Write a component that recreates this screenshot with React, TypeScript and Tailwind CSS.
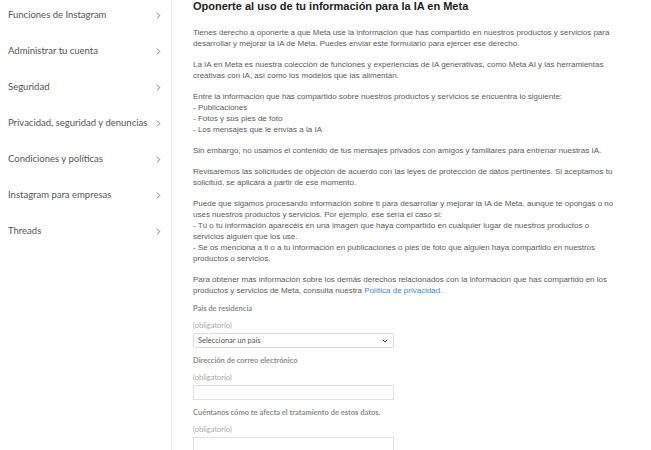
import { ChevronRight, ChevronDown } from 'lucide-react'

const NAV_ITEMS = [
  'Funciones de Instagram',
  'Administrar tu cuenta',
  'Seguridad',
  'Privacidad, seguridad y denuncias',
  'Condiciones y políticas',
  'Instagram para empresas',
  'Threads',
]

function Sidebar() {
  return (
    <nav className="w-[172px] shrink-0 border-r border-[#e6e6e6] font-['Lato',sans-serif]">
      <ul className="-mt-[3px]">
        {NAV_ITEMS.map((item) => (
          <li
            key={item}
            className="flex h-[36px] items-center justify-between pl-[8px] pr-[7px] text-[9.5px] text-[#555]"
          >
            <span className="whitespace-nowrap">{item}</span>
            <ChevronRight className="h-[11px] w-[11px] shrink-0 text-[#555]" strokeWidth={1.6} />
          </li>
        ))}
      </ul>
    </nav>
  )
}

function Field({
  label,
  children,
}: {
  label: string
  children: React.ReactNode
}) {
  return (
    <div className="mt-[7px]">
      <div className="font-['Lato',sans-serif] text-[7.5px] font-bold leading-[12px] text-[#8d8d8d]">
        {label}
      </div>
      <div className="mt-[5px] font-['Lato',sans-serif] text-[7.5px] leading-[12px] text-[#a8a8a8]">
        (obligatorio)
      </div>
      <div className="mt-[1px]">{children}</div>
    </div>
  )
}

export default function App() {
  return (
    <div className="flex min-h-[450px] w-[651px] overflow-hidden bg-white">
      <Sidebar />

      <main className="w-[446px] pl-[21px] font-['Liberation_Sans',Arial,sans-serif]">
        <h1 className="-mt-[1px] text-[11px] font-bold leading-[14px] text-[#1c1e21]">
          Oponerte al uso de tu información para la IA en Meta
        </h1>

        <div className="mt-[14px] space-y-[10px] text-[8px] leading-[11px] text-[#5b5b5b]">
          <p>
            Tienes derecho a oponerte a que Meta use la información que has compartido en nuestros
            productos y servicios para desarrollar y mejorar la IA de Meta. Puedes enviar este
            formulario para ejercer ese derecho.
          </p>
          <p>
            La IA en Meta es nuestra colección de funciones y experiencias de IA generativas, como
            Meta AI y las herramientas creativas con IA, así como los modelos que las alimentan.
          </p>
          <p>
            Entre la información que has compartido sobre nuestros productos y servicios se
            encuentra lo siguiente:
            <br />- Publicaciones
            <br />- Fotos y sus pies de foto
            <br />- Los mensajes que le envías a la IA
          </p>
          <p>
            Sin embargo, no usamos el contenido de tus mensajes privados con amigos y familiares para
            entrenar nuestras IA.
          </p>
          <p>
            Revisaremos las solicitudes de objeción de acuerdo con las leyes de protección de datos
            pertinentes. Si aceptamos tu solicitud, se aplicará a partir de ese momento.
          </p>
          <p>
            Puede que sigamos procesando información sobre ti para desarrollar y mejorar la IA de
            Meta, aunque te opongas o no uses nuestros productos y servicios. Por ejemplo, ese sería
            el caso si:
            <br />- Tú o tu información aparecéis en una imagen que haya compartido en cualquier lugar
            de nuestros productos o servicios alguien que los use.
            <br />- Se os menciona a ti o a tu información en publicaciones o pies de foto que alguien
            haya compartido en nuestros productos o servicios.
          </p>
          <p>
            Para obtener más información sobre los demás derechos relacionados con la información
            que has compartido en los productos y servicios de Meta, consulta nuestra{' '}
            <a className="text-[#4a86c5]">Política de privacidad.</a>
          </p>
        </div>

        <div className="mt-[5px] w-[201px]">
          <Field label="País de residencia">
            <div className="flex h-[15px] items-center justify-between rounded-[2px] border border-[#dcdcdc] px-[4px] font-['Lato',sans-serif] text-[7.5px] text-[#555]">
              <span>Seleccionar un país</span>
              <ChevronDown className="h-[8px] w-[8px] text-[#444]" strokeWidth={3} />
            </div>
          </Field>
          <Field label="Dirección de correo electrónico">
            <div className="h-[15px] border border-[#e0e0e0]" />
          </Field>
          <Field label="Cuéntanos cómo te afecta el tratamiento de estos datos.">
            <div className="h-[20px] border border-[#e0e0e0]" />
          </Field>
        </div>
      </main>
    </div>
  )
}
